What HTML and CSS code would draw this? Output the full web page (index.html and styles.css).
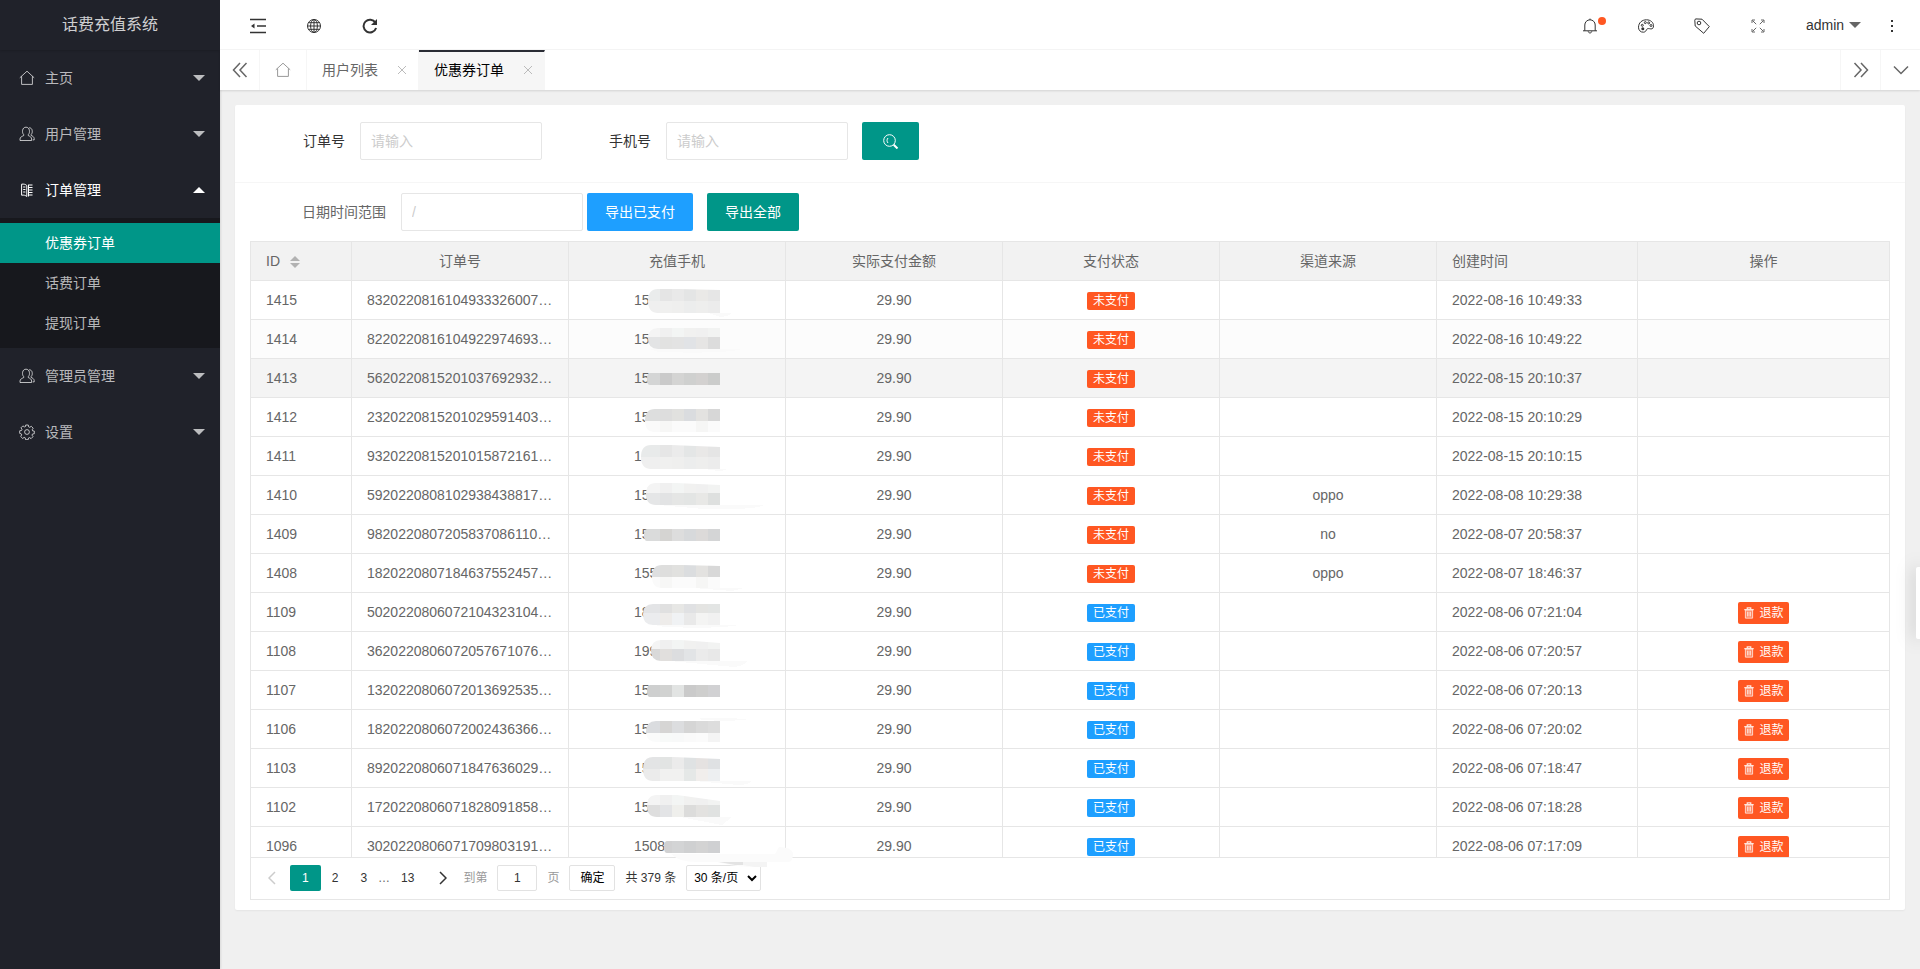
FILE: index.html
```html
<!DOCTYPE html>
<html lang="zh-CN">
<head>
<meta charset="utf-8">
<title>话费充值系统</title>
<link rel="stylesheet" href="styles.css">
</head>
<body>
<svg class="defs" aria-hidden="true">
  <symbol id="i-home" viewBox="0 0 16 16"><path d="M.8 7.8 8 1.2l7.2 6.6M2.6 6.4v8h10.8v-8"/></symbol>
  <symbol id="i-user" viewBox="0 0 16 16"><path d="M4.700 9.600v-1C3.500 7.500 3.400 5.800 3.600 4.300 3.900 2.300 5.200 1.200 7 1.200s3.100 1.100 3.400 3.100c.2 1.500.1 3.200-1.100 4.300v1c1.800.8 3.200 1.500 3.300 3.400v1.500H1V13c.1-1.900 1.900-2.600 3.700-3.400zM10.200 1.700c1.700.1 2.800 1.200 3 2.900.2 1.500 0 3-1.100 4v.8c1.600.7 2.900 1.400 3.100 3.200v1.300h-1.500"/></symbol>
  <symbol id="i-order" viewBox="0 0 16 16"><path d="M2.600 2.200c2.200-.4 4 .2 5.200 1.300v11c-1.200-1.100-3-1.700-5.200-1.300zM4.200 5h2.200M4.200 7.500h2.200M4.200 10h2.200M10 3h3.500M10 5.500h3.500M10 8h3.500M10 10.500h3.500M10 13h3.500M9.500 2.500v12"/></symbol>
  <symbol id="i-gear" viewBox="0 0 16 16"><circle cx="8" cy="8" r="2.400"/><path d="M6.700 1h2.600l.4 1.900 1 .4 1.600-1 1.900 1.900-1 1.600.4 1 1.700.3v2.600l-1.900.4-.4 1 1 1.600-1.900 1.900-1.600-1-1 .4-.3 1.700H6.600l-.4-1.900-1-.4-1.600 1-1.900-1.900 1-1.600-.4-1L.7 9.400V6.800l1.900-.4.4-1-1-1.600 1.900-1.900 1.600 1 1-.4z"/></symbol>
  <symbol id="i-trash" viewBox="0 0 12 14"><path fill="currentColor" fill-opacity=".35" d="M1.800 3.500h8.400v9.500H1.800z"/><path stroke-width="1.500" d="M.5 3h11M4 2.700V1h4v1.700"/><path d="M4.300 5.500v5.500M6 5.500v5.500M7.700 5.500v5.500"/></symbol>
</svg>
<div class="app">
  <aside class="side">
    <h1 class="logo">话费充值系统</h1>
    <nav>
      <a class="nav-item" href="#"><svg class="icon"><use href="#i-home"/></svg>主页<i class="caret"></i></a>
      <a class="nav-item" href="#"><svg class="icon"><use href="#i-user"/></svg>用户管理<i class="caret"></i></a>
      <a class="nav-item open" href="#"><svg class="icon"><use href="#i-order"/></svg>订单管理<i class="caret up"></i></a>
      <div class="subnav">
        <a class="current" href="#">优惠券订单</a>
        <a href="#">话费订单</a>
        <a href="#">提现订单</a>
      </div>
      <a class="nav-item" href="#"><svg class="icon"><use href="#i-user"/></svg>管理员管理<i class="caret"></i></a>
      <a class="nav-item" href="#"><svg class="icon"><use href="#i-gear"/></svg>设置<i class="caret"></i></a>
    </nav>
  </aside>
  <div class="main">
    <header class="topbar">
      <button class="tool" aria-label="收起菜单"><svg class="icon dark" viewBox="0 0 16 16"><path class="thick" d="M0 1.500h16M7 8h9M0 14.500h16"/><path class="solid" d="M1 8l3.500-2.500v5z"/></svg></button>
      <button class="tool" aria-label="网站"><svg class="icon dark" viewBox="0 0 16 16"><circle cx="8" cy="8" r="6.500"/><ellipse cx="8" cy="8" rx="3.400" ry="6.500"/><path d="M8 1.500v13M1.500 8h13M2.400 4.700h11.200M2.400 11.300h11.200"/></svg></button>
      <button class="tool" aria-label="刷新"><svg class="icon dark" viewBox="0 0 16 16"><path class="bold" d="M13.400 4.600A6.400 6.400 0 1 0 14.100 10"/><path class="solid" d="M15 1v6H9z"/></svg></button>
      <span class="space"></span>
      <button class="tool" aria-label="消息"><svg class="icon dark" viewBox="0 0 16 16"><path d="M1 12.800h14M2.800 12.800V7a5.200 5.200 0 0 1 10.400 0v5.800M6.200 13.300c.2 2.200 3.400 2.200 3.600 0M8 1.800V.6"/></svg><i class="dot"></i></button>
      <button class="tool" aria-label="主题"><svg class="icon dark" viewBox="0 0 16 16"><path d="M5.500 14.200C2.400 14.400.4 12 .5 9.200.6 4.700 4 1.800 8.500 1.800c4 0 7 2.600 7 5.900 0 2.300-1 3.400-2.700 3.200-2-.3-3.300-.7-4 .4-.7 1.300-1.200 2.700-3.300 2.900z"/><circle cx="4.300" cy="7.300" r="1"/><circle cx="7.300" cy="4.600" r="1"/><circle cx="10.700" cy="4.900" r="1"/><circle cx="13" cy="7.500" r="1"/><circle class="solid" cx="4.800" cy="10.800" r="1.500"/></svg></button>
      <button class="tool" aria-label="便签"><svg class="icon dark" viewBox="0 0 16 16"><path d="M.8 2.200 1.500.9l6.500.3 7.300 7.400-5.600 6.700L1.200 8z"/><circle cx="5" cy="5" r="1.800"/></svg></button>
      <button class="tool" aria-label="全屏"><svg class="icon mid" viewBox="0 0 16 16"><path d="M2.500 2.500l3.700 3.700M13.500 2.500 9.800 6.200M2.500 13.500l3.700-3.700M13.500 13.500 9.800 9.800M2 5V2h3M11 2h3v3M2 11v3h3M14 11v3h-3"/></svg></button>
      <button class="user">admin<i class="caret"></i></button>
      <button class="tool" aria-label="更多"><svg class="icon dark" viewBox="0 0 16 16"><path class="solid" d="M7 2h2v2H7zM7 7h2v2H7zM7 12h2v2H7z"/></svg></button>
    </header>
    <div class="tabs">
      <button class="ctl prev" aria-label="向左"><svg class="icon" viewBox="0 0 16 16"><path class="thick" d="M8 1 1.500 8 8 15M14.500 1 8 8l6.500 7"/></svg></button>
      <a class="tab home" href="#" aria-label="主页"><svg class="icon"><use href="#i-home"/></svg></a>
      <a class="tab" href="#">用户列表<svg class="x" viewBox="0 0 10 10"><path d="M1 1l8 8M9 1 1 9"/></svg></a>
      <a class="tab active" href="#">优惠券订单<svg class="x" viewBox="0 0 10 10"><path d="M1 1l8 8M9 1 1 9"/></svg></a>
      <span class="space"></span>
      <button class="ctl" aria-label="向右"><svg class="icon" viewBox="0 0 16 16"><path class="thick" d="M1.500 1 8 8l-6.500 7M8 1l6.500 7L8 15"/></svg></button>
      <button class="ctl" aria-label="标签操作"><svg class="icon" viewBox="0 0 16 16"><path class="thick" d="M1 4.500l7 7 7-7"/></svg></button>
    </div>
    <main class="card">
      <form class="search">
        <label for="order">订单号</label><input class="field" id="order" type="text" placeholder="请输入">
        <label class="second" for="phone">手机号</label><input class="field" id="phone" type="text" placeholder="请输入">
        <button class="btn find" type="button" aria-label="搜索"><svg class="icon" viewBox="0 0 16 16"><circle cx="6.500" cy="7.500" r="5.800"/><path d="M5 5c-1.300 1.500-1.300 3.500 0 5"/><path class="bold" d="M10.700 11.700l3.800 3.800"/></svg></button>
      </form>
      <form class="export">
        <label for="range">日期时间范围</label><input class="field" id="range" type="text" placeholder="/">
        <button class="btn blue" type="button">导出已支付</button>
        <button class="btn" type="button">导出全部</button>
      </form>
      <section class="grid">
        <div class="scroll">
          <table>
            <colgroup><col class="c-id"><col class="c-mid"><col class="c-mid"><col class="c-mid"><col class="c-mid"><col class="c-mid"><col class="c-time"><col></colgroup>
            <thead><tr><th class="left">ID<span class="sort"><i></i><i></i></span></th><th>订单号</th><th>充值手机</th><th>实际支付金额</th><th>支付状态</th><th>渠道来源</th><th class="left">创建时间</th><th>操作</th></tr></thead>
            <tbody id="rows"></tbody>
          </table>
        </div>
        <div class="pager">
          <button class="arrow off" aria-label="上一页"><svg viewBox="0 0 8 14"><path d="M7 1 1 7l6 6"/></svg></button>
          <button class="page on">1</button><button class="page">2</button><button class="page">3</button><span class="more">…</span><button class="page">13</button>
          <button class="arrow" aria-label="下一页"><svg viewBox="0 0 8 14"><path d="M1 1l6 6-6 6"/></svg></button>
          <div class="jump"><label for="goto">到第</label><input id="goto" type="text" value="1"><span>页</span><button class="ok">确定</button><span class="total">共 379 条</span><select aria-label="每页条数"><option>30 条/页</option></select></div>
          <svg class="smear" viewBox="0 0 130 20"><path fill="#fbfbfb" d="M2 4h104l4-7q12 0 14 6 0 9-5 9H28Q10 12 2 4zM98 12V17H80Q60 16 48 12z"/><path fill="#e3e3e3" d="M50 12h24v3h-8z"/><path fill="#f4f4f4" d="M74 12h24v5h-12l-12-2z"/></svg>
        </div>
      </section>
    </main>
  </div>
  <div class="drawer"></div>
</div>
<script src="app.js"></script>
</body>
</html>
```
FILE: styles.css
```css
* { box-sizing: border-box; }
body {
  margin: 0;
  font: 14px/24px "Liberation Sans", "Noto Sans CJK SC", sans-serif;
  color: #333;
  background: #f0f0f0;
}
button, input, select { font-family: inherit; font-size: inherit; margin: 0; }
button { border: 0; background: none; padding: 0; color: inherit; }
a { color: inherit; text-decoration: none; }
.defs { position: absolute; width: 0; height: 0; }
svg { fill: none; stroke: currentColor; stroke-width: 1; }
.icon { width: 16px; height: 16px; display: block; flex: none; }
.thick { stroke-width: 1.5; }
.bold { stroke-width: 2; }
.solid { fill: currentColor; stroke: none; }
.space { flex: 1; }
.caret {
  border: 6px solid transparent;
  border-top-color: currentColor;
  border-bottom-width: 0;
}
.caret.up { border-bottom-width: 6px; border-top-width: 0; border-bottom-color: #fff; }

.app { display: flex; min-height: 100vh; }
.side { width: 220px; flex: none; background: #20222a; color: rgba(255, 255, 255, .7); box-shadow: 1px 0 2px rgba(0, 0, 0, .1); }
.logo {
  margin: 0;
  height: 50px;
  line-height: 49px;
  font-size: 16px;
  font-weight: 400;
  text-align: center;
  color: rgba(255, 255, 255, .8);
  box-shadow: 0 1px 2px rgba(0, 0, 0, .15);
}
.nav-item { display: flex; align-items: center; height: 56px; padding: 0 15px 0 19px; gap: 10px; }
.nav-item .caret { margin-left: auto; }
.nav-item.open { color: #fff; }
.subnav { background: #17181d; padding: 5px 0; }
.subnav a { display: block; height: 40px; line-height: 40px; padding-left: 45px; }
.subnav .current { background: #009688; color: #fff; }

.main { flex: 1; min-width: 0; }
.topbar { display: flex; align-items: center; height: 50px; padding-left: 10px; background: #fff; border-bottom: 1px solid #f6f6f6; }
.tool { width: 56px; height: 49px; padding: 3px 20px 0; position: relative; }
.dark { color: #333; }
.mid { color: #666; }
.dot { position: absolute; left: 36px; top: 17px; width: 8px; height: 8px; border-radius: 50%; background: #ff5722; }
.user { display: flex; align-items: center; gap: 5px; width: 78px; padding-left: 20px; }
.user .caret { border-top-color: #666; }

.tabs { display: flex; height: 40px; background: #fff; color: #666; box-shadow: 0 1px 2px rgba(0, 0, 0, .12); position: relative; }
.ctl { width: 40px; display: flex; align-items: center; justify-content: center; border-left: 1px solid #f6f6f6; }
.ctl.prev { border-left: 0; border-right: 1px solid #f6f6f6; }
.tab { display: flex; align-items: center; padding: 0 10px 0 15px; border-right: 1px solid #f6f6f6; line-height: 40px; }
.tab.home { padding: 0 15px; color: #999; }
.tab .x { width: 10px; height: 10px; margin: 0 1px 0 19px; color: #bbb; }
.tab.active { background: #f6f6f6; color: #000; border-top: 2px solid #292b34; padding-bottom: 2px; }

.card { margin: 15px; background: #fff; border-radius: 2px; box-shadow: 0 1px 2px rgba(0, 0, 0, .05); }
.search, .export { display: flex; align-items: center; padding-left: 68px; }
.search { padding-top: 17px; padding-bottom: 22px; border-bottom: 1px solid #f6f6f6; }
.export { padding: 10px 0 10px 67px; color: #666; }
.field { width: 182px; height: 38px; border: 1px solid #e6e6e6; border-radius: 2px; margin-left: 15px; padding: 0 10px; background: #fff; }
.field::placeholder { color: #ccc; }
.second { margin-left: 67px; }
.btn { height: 38px; padding: 0 18px; background: #009688; color: #fff; border-radius: 2px; line-height: 38px; }
.btn.find { margin-left: 14px; width: 57px; display: flex; align-items: center; justify-content: center; }
.btn.blue { background: #1e9fff; margin: 0 14px 0 4px; }

.grid { margin: 0 15px; border: 1px solid #e6e6e6; position: relative; }
.card::after { content: ""; display: block; height: 10px; }
.scroll { height: calc(100vh - 354px); overflow: hidden; }
table { width: 100%; table-layout: fixed; border-collapse: separate; border-spacing: 0; color: #666; }
.c-id { width: 101px; }
.c-mid { width: 217px; }
.c-time { width: 201px; }
th, td {
  height: 39px;
  padding: 5px 15px;
  line-height: 28px;
  border: solid #e6e6e6;
  border-width: 0 1px 1px 0;
  font-weight: 400;
  text-align: center;
  white-space: nowrap;
}
th { background: #f2f2f2; }
th:last-child, td:last-child { border-right: 0; }
.left { text-align: left; }
.even td { background: #fcfcfc; }
.hover td { background: #f4f4f4; }
.sort { display: inline-flex; flex-direction: column; gap: 2px; margin-left: 10px; vertical-align: middle; }
.sort i { border: 5px solid transparent; border-top: 0; border-bottom-color: #b2b2b2; }
.sort i + i { border-top: 5px solid #b2b2b2; border-bottom: 0; }
.phone { display: block; position: relative; width: 86px; margin: 0 auto; text-align: left; height: 28px; }
.mask { position: absolute; left: 0; top: -5px; width: 86px; height: 38px; overflow: visible; stroke: none; }
.badge { display: inline-block; height: 18px; line-height: 18px; padding: 0 6px; font-size: 12px; color: #fff; border-radius: 2px; background: #ff5722; vertical-align: middle; }
.badge.paid { background: #1e9fff; }
.refund { display: inline-flex; align-items: center; gap: 4px; height: 22px; padding: 0 5px; font-size: 12px; line-height: 22px; color: #fff; background: #ff5722; border-radius: 2px; vertical-align: middle; }
.refund svg { width: 12px; height: 12px; opacity: .85; }

.pager { display: flex; align-items: flex-start; height: 42px; padding: 7px 3px; border-top: 1px solid #e6e6e6; font-size: 12px; line-height: 26px; position: relative; }
.page { height: 26px; padding: 0 11px; }
.page.on { padding: 0 12px; background: #009688; color: #fff; border-radius: 2px; }
.more { width: 12px; color: #666; }
.arrow { width: 36px; height: 26px; display: flex; align-items: center; justify-content: center; }
.arrow svg { width: 8px; height: 14px; stroke-width: 1.5; }
.off { color: #ccc; }
.jump { display: flex; gap: 10px; color: #999; padding-left: 2px; }
.jump input { width: 40px; height: 26px; border: 1px solid #e2e2e2; border-radius: 2px; text-align: center; padding: 0; color: #333; }
.ok { height: 26px; padding: 0 10px; border: 1px solid #e2e2e2; border-radius: 2px; color: #000; line-height: 24px; }
.total { color: #333; }
.jump select { width: 75px; height: 26px; border: 1px solid #e2e2e2; border-radius: 2px; background: #fff; color: #000; padding: 0 3px; }
.smear { position: absolute; left: 418px; top: -8px; width: 130px; height: 20px; overflow: visible; stroke: none; }
.drawer { position: fixed; right: 0; top: 567px; width: 4px; height: 72px; background: #fff; border-radius: 2px 0 0 2px; box-shadow: 0 0 18px rgba(0, 0, 0, .35); }
```
FILE: app.js
```javascript
// Mask: left edge, shape top, shape bottom, right-hand slope at top, then strips of [y, height, six fills].
const light = "efefef f0f0ef efefee eceded eeeeed ececec";
const faint = "fafafa f7f7f6 fbfbfb fbfbfb f6f6f5 fbfbfb";
const pale = "f4f4f4 f0f0f0 f3f5f4 f1f1f0 f0f0f0 f2f3f2";
const rows = [
  [1415, "8320220816104933326007", "15", "", "2022-08-16 10:49:33", [14, 8, 32, 1, [8, 12, "eaecec e5e5e5 e9e9e9 e4e5e5 eae9e7 e6e6e6"], [20, 12, light]], "M74 32h24q-5 4-12 4z"],
  [1414, "8220220816104922974693", "15", "", "2022-08-16 10:49:22", [14, 8, 29, 0, [8, 9, pale], [17, 12, "e3e4e5 e2e2e1 e3e3e3 e1e3e6 e6e5e4 dcdcdc"]], "M16 29h92q-16 5-84 3z"],
  [1413, "5620220815201037692932", "15", "", "2022-08-15 20:10:37", [13, 14, 26, 0, [14, 12, "d4d5d5 cacaca d4d4d3 cfd0cf d3d1d0 cbcccb"]], ""],
  [1412, "2320220815201029591403", "15", "", "2022-08-15 20:10:29", [11, 11, 34, 0, [11, 12, "dddede dddddd e1e1df dadcdf e3e2e0 d7d7d7"], [23, 11, faint]], ""],
  [1411, "9320220815201015872161", "15", "", "2022-08-15 20:10:15", [7, 8, 32, 2, [8, 12, "e8eaea e6e6e6 ebebeb e4e6e6 e9e8e7 e5e5e5"], [20, 12, light]], "M70 32h24q-5 2-10 2z"],
  [1410, "5920220808102938438817", "15", "oppo", "2022-08-08 10:29:38", [12, 7, 29, 2, [7, 10, pale], [17, 12, "e5e6e7 e2e3e4 e5e6e5 e3e5e4 e8e8e6 dee0df"]], "M24 29h106q-8 5-60 4z"],
  [1409, "9820220807205837086110", "15", "no", "2022-08-07 20:58:37", [10, 14, 26, 0, [14, 12, "dadbdb d5d4d2 dddddd d7d9db dcdad9 d4d5d6"]], ""],
  [1408, "1820220807184637552457", "155", "oppo", "2022-08-07 18:46:37", [18, 11, 34, 1, [11, 12, "dedfe0 dededd e1e1df dbdddf e3e2e0 d8d8d8"], [23, 11, faint]], "M60 34h50l-12 3z"],
  [1109, "5020220806072104323104", "18", "", "2022-08-06 07:21:04", [9, 11, 32, 0, [11, 9, "e3e4e6 e0e0e0 e7e7e5 e0e1e3 e4e4e2 e3e5e4"], [20, 12, "ebecee eeecea f0f2f4 e9e9e9 f4f4f3 f1f1f1"]], "M20 32h84q-16 4-74 2z", 1],
  [1108, "3620220806072057671076", "199", "", "2022-08-06 07:20:57", [17, 8, 29, 3, [8, 9, pale], [17, 12, "d9d9d9 e1dfdd dcdddf e2e4e6 ebebeb e8e8e8"]], "M36 29h78q-4 5-14 6z", 1],
  [1107, "1320220806072013692535", "15", "", "2022-08-06 07:20:13", [13, 14, 26, 0, [14, 12, "cecfcf d1d2d1 e2e4e3 cacaca cececd d1d1d3"]], "", 1],
  [1106, "1820220806072002436366", "15", "", "2022-08-06 07:20:02", [12, 11, 32, 0, [11, 12, "dadcdf d6d5d4 dcdddf d5d5d5 dadada dddddd"], [23, 9, "fafbfb f8faf9 f8f9f9 fafafa fbfbfb f4f4f4"]], "M60 9q30-3 56 1l-30 1z", 1],
  [1103, "8920220806071847636029", "15", "", "2022-08-06 07:18:47", [9, 8, 32, 2, [8, 12, "e3e4e5 e2e4e3 ebebeb dfe2e3 e5e2e1 dfe1e3"], [20, 12, "ebebeb f1f1f0 f1f1f0 e5e8e7 f1eeec edeff1"]], "M60 32h58q-4 4-14 4z", 1],
  [1102, "1720220806071828091858", "15", "", "2022-08-06 07:18:28", [13, 7, 29, 6, [7, 10, pale], [17, 12, "dedede e3e4e6 efefec dcdcdb e3e2e0 e0e2e1"]], "M46 29h52l-10 8z", 1],
  [1096, "3020220806071709803191", "15089", "", "2022-08-06 07:17:09", [30, 14, 26, 0, [14, 12, "d1d1d2 d1d1d2 d3d4d5 cfd0d1 d3d3d3 cfd0d2"]], "", 1]
];

function mask(id, [x, top, bottom, slope, ...strips], tail) {
  const mid = (top + bottom) / 2;
  const r = (bottom - top) / 2 > 6 ? 10 : 3;
  const rects = strips.map(([y, h, fills]) =>
    fills.split(" ").map((c, i) => `<rect x="${i ? 14 + i * 12 : 0}" y="${y}" width="${i ? 12 : 26}" height="${h}" fill="#${c}"/>`).join("")
  ).join("");
  return `<svg class="mask" shape-rendering="crispEdges"><clipPath id="m${id}"><path d="M86 ${top + slope}L${x + r + 20} ${top}H${x + r}Q${x} ${top} ${x} ${mid}Q${x} ${bottom} ${x + r} ${bottom}H86z"/></clipPath>` +
    `<path d="${tail}" fill="#fafafa"/><g clip-path="url(#m${id})">${rects}</g></svg>`;
}

document.getElementById("rows").innerHTML = rows.map(([id, order, phone, source, time, shape, tail, paid], i) => `
  <tr class="${["", "even", "hover"][i] || ""}">
    <td class="left">${id}</td>
    <td class="left">${order}…</td>
    <td><span class="phone">${phone}${mask(id, shape, tail)}</span></td>
    <td>29.90</td>
    <td><span class="badge${paid ? " paid" : ""}">${paid ? "已支付" : "未支付"}</span></td>
    <td>${source}</td>
    <td class="left">${time}</td>
    <td>${paid ? '<button class="refund"><svg><use href="#i-trash"/></svg>退款</button>' : ""}</td>
  </tr>`).join("");
```
